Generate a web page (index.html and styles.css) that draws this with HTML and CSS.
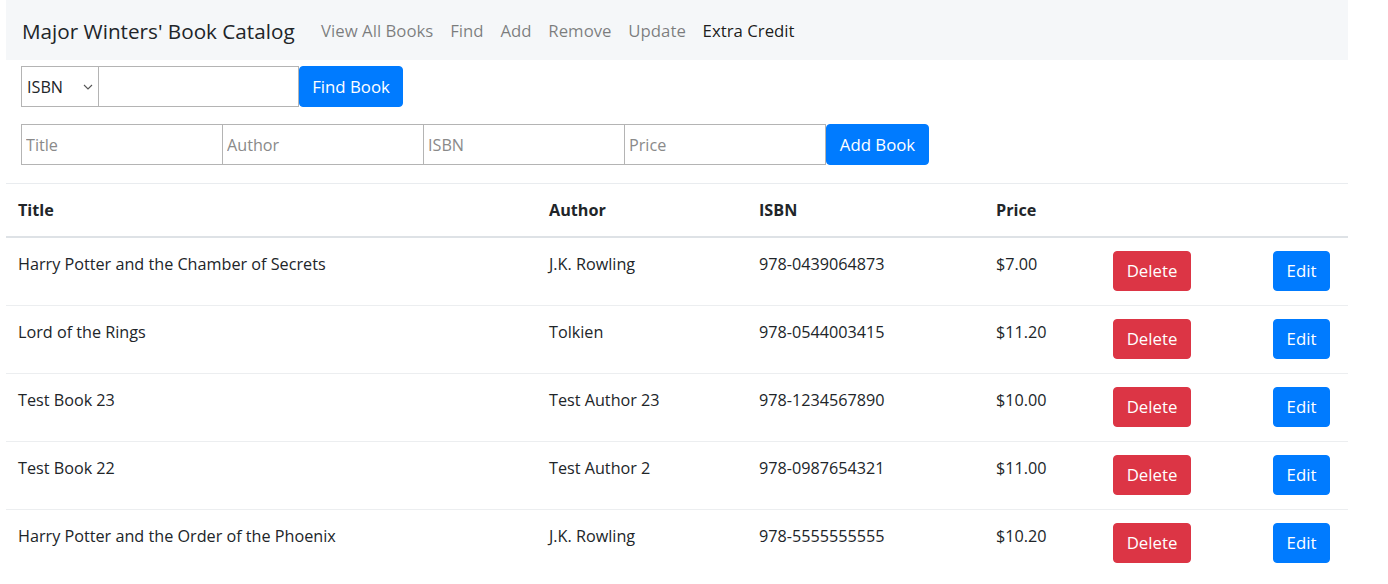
FILE: index.html
```html
<!DOCTYPE html>
<html>
<head>
<meta charset="utf-8">
<title>Major Winters' Book Catalog</title>
<link rel="stylesheet" href="styles.css">
</head>
<body>
<div class="page">
  <nav class="navbar">
    <span class="brand">Major Winters' Book Catalog</span>
    <a class="nav-link">View All Books</a>
    <a class="nav-link">Find</a>
    <a class="nav-link">Add</a>
    <a class="nav-link">Remove</a>
    <a class="nav-link">Update</a>
    <a class="nav-link active">Extra Credit</a>
  </nav>
  <form class="find-form">
    <select class="field select"><option>ISBN</option></select>
    <input class="field find-input" type="text">
    <button type="button" class="btn btn-primary">Find Book</button>
  </form>
  <form class="add-form">
    <input class="field add-input" type="text" placeholder="Title">
    <input class="field add-input" type="text" placeholder="Author">
    <input class="field add-input" type="text" placeholder="ISBN">
    <input class="field add-input" type="text" placeholder="Price">
    <button type="button" class="btn btn-primary">Add Book</button>
  </form>
  <table class="table">
    <colgroup>
      <col class="c-title"><col class="c-author"><col class="c-isbn"><col class="c-price"><col class="c-del"><col class="c-edit">
    </colgroup>
    <thead>
      <tr><th>Title</th><th>Author</th><th>ISBN</th><th>Price</th><th></th><th></th></tr>
    </thead>
    <tbody>
      <tr><td>Harry Potter and the Chamber of Secrets</td><td>J.K. Rowling</td><td>978-0439064873</td><td>$7.00</td><td><button class="btn btn-danger">Delete</button></td><td><button class="btn btn-primary btn-edit">Edit</button></td></tr>
      <tr><td>Lord of the Rings</td><td>Tolkien</td><td>978-0544003415</td><td>$11.20</td><td><button class="btn btn-danger">Delete</button></td><td><button class="btn btn-primary btn-edit">Edit</button></td></tr>
      <tr><td>Test Book 23</td><td>Test Author 23</td><td>978-1234567890</td><td>$10.00</td><td><button class="btn btn-danger">Delete</button></td><td><button class="btn btn-primary btn-edit">Edit</button></td></tr>
      <tr><td>Test Book 22</td><td>Test Author 2</td><td>978-0987654321</td><td>$11.00</td><td><button class="btn btn-danger">Delete</button></td><td><button class="btn btn-primary btn-edit">Edit</button></td></tr>
      <tr><td>Harry Potter and the Order of the Phoenix</td><td>J.K. Rowling</td><td>978-5555555555</td><td>$10.20</td><td><button class="btn btn-danger">Delete</button></td><td><button class="btn btn-primary btn-edit">Edit</button></td></tr>
    </tbody>
  </table>
</div>
</body>
</html>
```

FILE: styles.css
```css
* { box-sizing: border-box; }
html, body { margin: 0; padding: 0; background: #fff; }
body {
  font-family: "Open Sans", "Noto Sans", sans-serif;
  font-size: 16.2px;
  color: #212529;
  overflow: hidden;
}
.page {
  width: 1342px;
  margin-left: 6px;
}
.navbar {
  height: 60px;
  background: #f5f7f9;
  display: flex;
  align-items: center;
  padding: 1px 16px 0;
}
.brand {
  font-size: 20.7px;
  color: #212529;
  margin-right: 18px;
}
.nav-link {
  font-size: 16.8px;
  color: rgba(0,0,0,.5);
  padding: 0 8.4px;
  text-decoration: none;
}
.nav-link.active { color: rgba(0,0,0,.9); }

.find-form {
  display: flex;
  margin: 6px 0 0 15px;
  height: 41px;
}
.add-form {
  display: flex;
  margin: 17px 0 0 15px;
  height: 41px;
}
.field {
  font-family: inherit;
  font-size: 16.2px;
  height: 41px;
  border: 1px solid #b4b4b4;
  border-radius: 0;
  padding: 0 4px;
  margin: 0;
  color: #212529;
  background: #fff;
  outline: none;
}
.field::placeholder { color: #8a8a8a; }
.select {
  width: 77px;
  appearance: none;
  -webkit-appearance: none;
  padding-left: 5px;
  background-image: url("data:image/svg+xml;utf8,<svg xmlns='http://www.w3.org/2000/svg' width='10' height='6' viewBox='0 0 10 6'><path d='M1 1l4 4 4-4' fill='none' stroke='%23555' stroke-width='1.1'/></svg>");
  background-repeat: no-repeat;
  background-position: right 5px center;
  border-right: none;
}
.find-input { width: 201px; }
.add-input { width: 202px; margin-right: -1px; }
.add-input:last-of-type { margin-right: 0; }

.btn {
  font-family: inherit;
  font-size: 16.8px;
  border: 1px solid transparent;
  border-radius: 4px;
  color: #fff;
  height: 41px;
  padding: 1px 14px 0;
  cursor: pointer;
  line-height: 1;
}
.btn-primary { background: #007bff; border-color: #007bff; }
.btn-danger { background: #dc3545; border-color: #dc3545; width: 78px; height: 40px; padding: 1px 0 0; }
.btn-edit { width: 57px; height: 40px; padding: 1px 0 0; }
.find-form .btn { width: 104px; padding: 1px 0 0; }
.add-form .btn { width: 103px; padding: 1px 0 0; }

.table {
  width: 1342px;
  margin-top: 18px;
  border-collapse: collapse;
  table-layout: fixed;
}
.c-title { width: 531px; }
.c-author { width: 210px; }
.c-isbn { width: 237px; }
.c-price { width: 117px; }
.c-del { width: 160px; }
.c-edit { width: 87px; }
.table th {
  text-align: left;
  font-weight: 700;
  padding: 13px 12px 13px;
  line-height: 26px;
  border-top: 1px solid #e9ecef;
  border-bottom: 2px solid #dee2e6;
}
.table td {
  padding: 13px 12px 14px;
  line-height: 26px;
  vertical-align: top;
  border-bottom: 1px solid #eceef0;
  white-space: nowrap;
}
.table tbody tr:last-child td { border-bottom: none; }
.table td .btn { display: block; }
```
